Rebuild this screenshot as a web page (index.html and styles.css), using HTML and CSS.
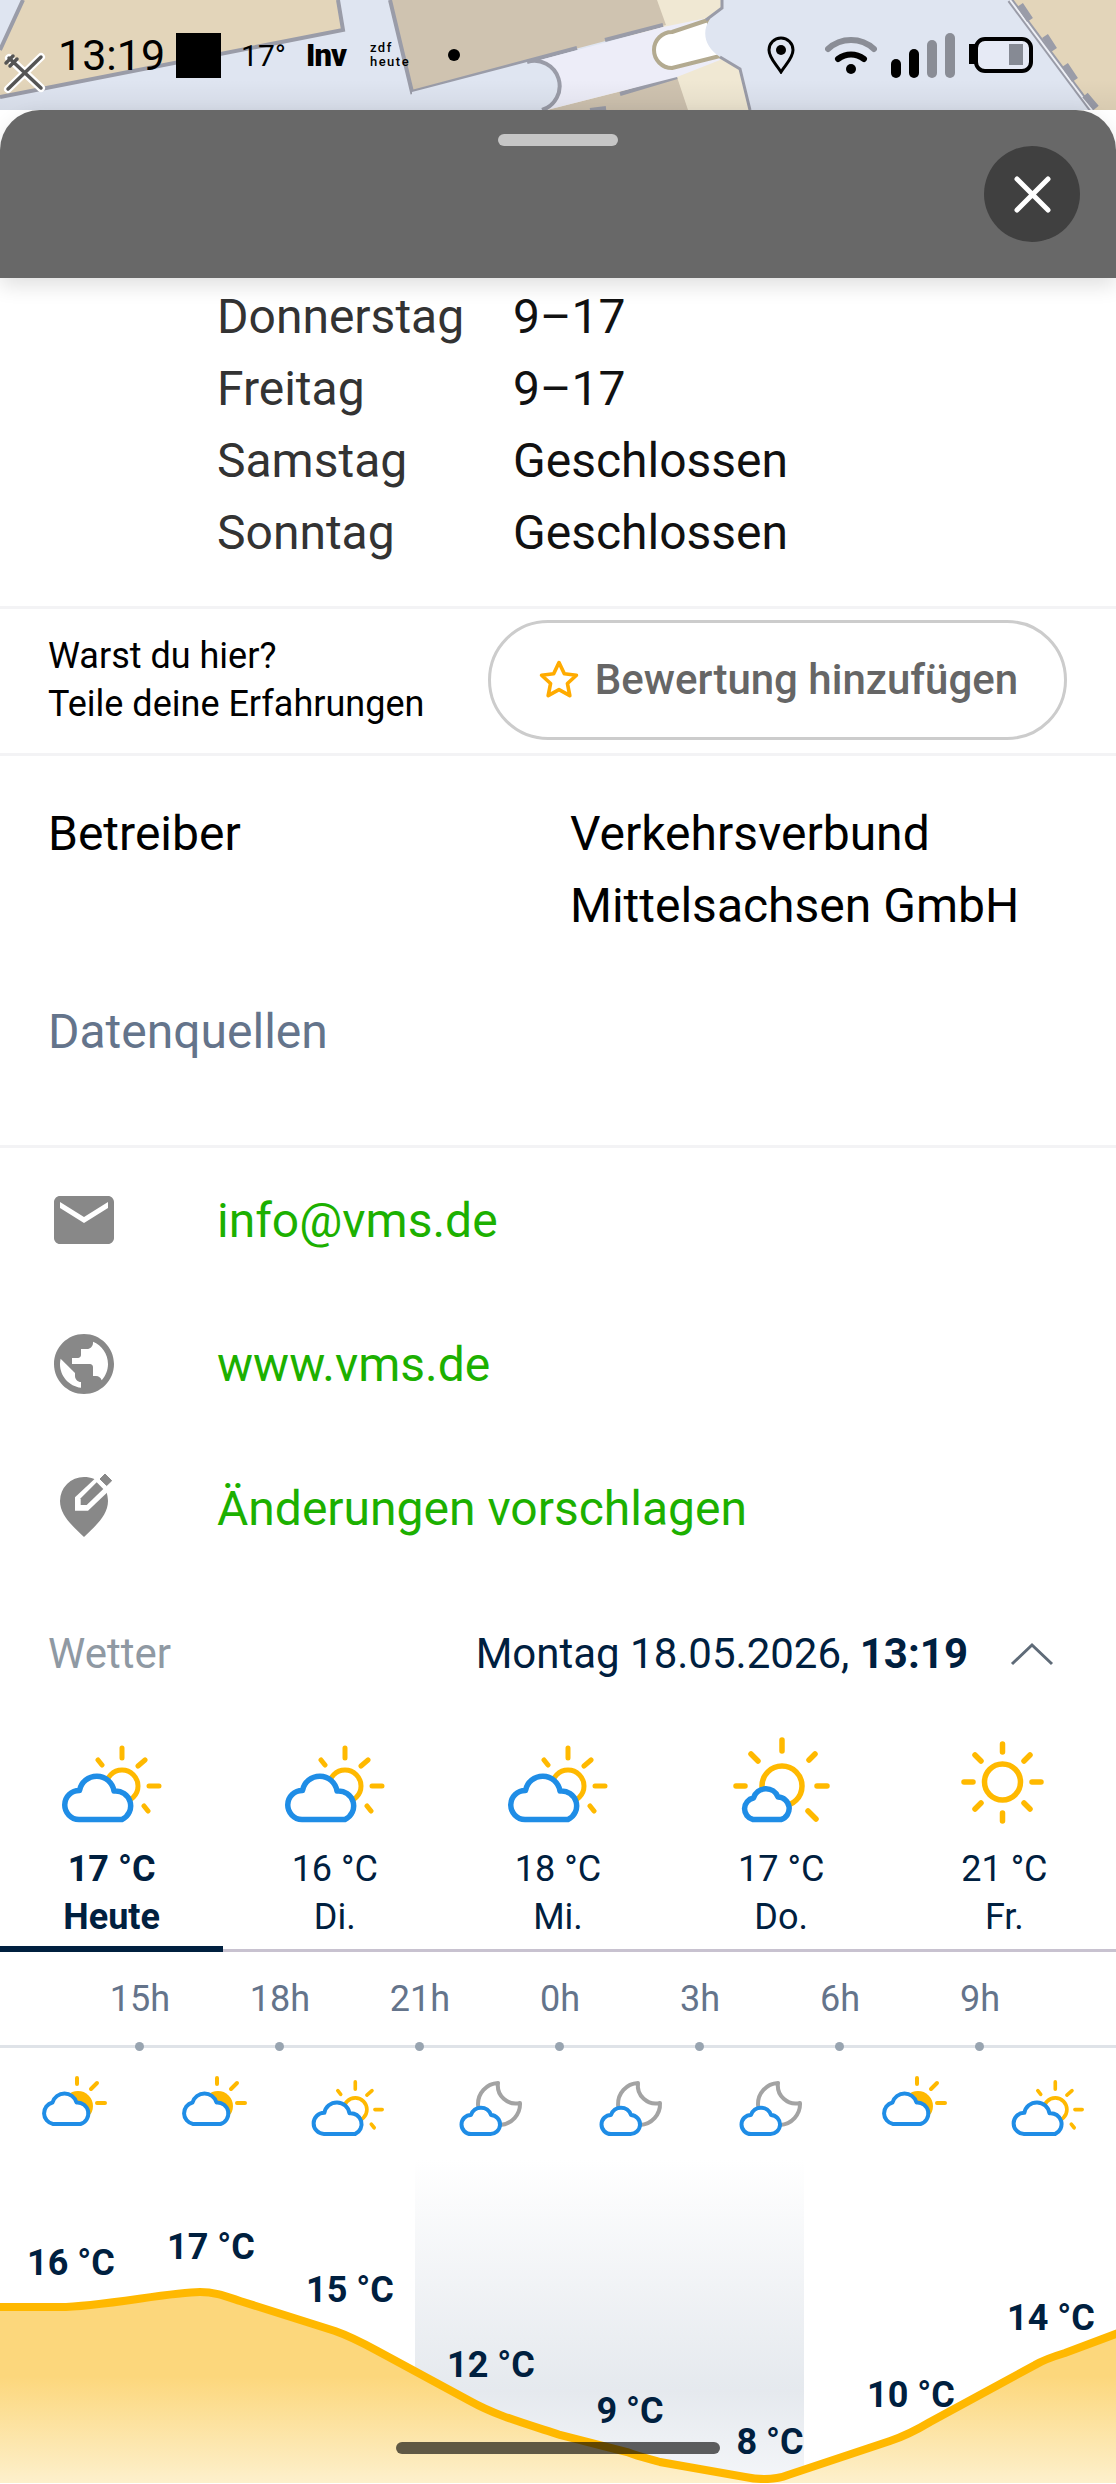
FILE: index.html
```html
<!DOCTYPE html>
<html lang="de">
<head>
  <meta charset="UTF-8"/>
  <meta name="viewport" content="width=device-width, initial-scale=1.0"/>
  <title>Verkehrsverbund Mittelsachsen</title>
  <link rel="stylesheet" href="styles.css">
</head>
<body>
  <svg class="defs" width="0" height="0">
    <defs>
      <symbol id="cloud-sun" viewBox="0 0 110 90">
        <g fill="none" stroke="#ffb900" stroke-width="5" stroke-linecap="round">
          <circle cx="65" cy="42" r="16"/>
          <path d="M65 4v10M81 22l7-6M92 42h10M87 62l4 5M41 16l4 5"/>
        </g>
        <path d="M22 75.5A14.5 14.5 0 0 1 22.5 46.5A17.5 17.5 0 0 1 57 47A15 15 0 0 1 65 75.5Z" fill="#fff" stroke="#1f8de6" stroke-width="5.5" stroke-linejoin="round"/>
      </symbol>
      <symbol id="sun-cloud" viewBox="0 0 110 96">
        <g fill="none" stroke="#ffb900" stroke-width="5.5" stroke-linecap="round">
          <circle cx="56" cy="50" r="20"/>
          <path d="M56 4v11M83 24l6-6M91 50h10M82 75l8 8M10 50h9M25 18l7 7"/>
        </g>
        <path d="M27 83.5A11 11 0 0 1 27.5 62A13 13 0 0 1 52 61A11.5 11.5 0 0 1 55 83.5Z" fill="#fff" stroke="#1f8de6" stroke-width="5.5" stroke-linejoin="round"/>
      </symbol>
      <symbol id="sun" viewBox="0 0 110 96">
        <g fill="none" stroke="#ffb900" stroke-width="5.5" stroke-linecap="round">
          <circle cx="53.5" cy="46" r="18"/>
          <path d="M53.5 8v8M53.5 77v8M15 46h9M83 46h9M26 19l6 6M81 19l-6 6M26 73l6-6M81 73l-6-6"/>
        </g>
      </symbol>
      <symbol id="hr-sun" viewBox="0 0 140 65">
        <circle cx="78" cy="32" r="15" fill="#ffb900"/>
        <path d="M77 4v6M91 15l6-6M97 29h8" fill="none" stroke="#ffb900" stroke-width="4" stroke-linecap="round"/>
        <path d="M53 50A11 11 0 0 1 52.500 28.500A12.500 12.500 0 0 1 76.500 28.500A11 11 0 0 1 80.500 50Z" fill="#fff" stroke="#1f8de6" stroke-width="4" stroke-linejoin="round"/>
      </symbol>
      <symbol id="hr-partly" viewBox="0 0 140 65">
        <use href="#cloud-sun" x="28" y="5" width="80" height="65.500"/>
      </symbol>
      <symbol id="hr-moon" viewBox="0 0 140 65">
        <path d="M78 9A21 21 0 1 0 100 29A18 18 0 0 1 78 9Z" fill="none" stroke="#a3a3a3" stroke-width="4" stroke-linejoin="round"/>
        <path d="M51 60A9.500 9.500 0 0 1 51 41A10.500 10.500 0 0 1 71 41A9.500 9.500 0 0 1 70 60Z" fill="#fff" stroke="#1f8de6" stroke-width="4" stroke-linejoin="round"/>
      </symbol>
    </defs>
  </svg>

  <div class="screen">
    <svg class="map" viewBox="0 0 1116 110" width="1116" height="110">
      <defs>
        <linearGradient id="mapShade" x1="0" y1="0" x2="0" y2="1">
          <stop offset="0" stop-color="#000" stop-opacity="0"/>
          <stop offset="1" stop-color="#000" stop-opacity=".05"/>
        </linearGradient>
      </defs>
      <rect width="1116" height="110" fill="#dfe5f1"/>
      <path d="M23 0H338L343 30L0 97V50Z" fill="#e3d5ba"/>
      <path d="M23 0L0 50M338 0L343 30L0 97" fill="none" stroke="#9a9ca8" stroke-width="4"/>
      <path d="M655 0H722V8L706 22L720 57L740 69L750 110H520L640 30Z" fill="#f0e8d3"/>
      <path d="M390 0H657L666 25L412 92Z" fill="#cfc3b0"/>
      <path d="M547 110L677 77L688 110Z" fill="#cfc3b0"/>
      <path d="M390 0L412 92L577 48M605 40L663 25M606 108L590 110M620 94L677 77" fill="none" stroke="#9a9ca8" stroke-width="4"/>
      <path d="M533 62L663 27L707 18L720 60L677 77L547 110Z" fill="#ededf8"/>
      <path d="M708 20L672 32A18 18 0 0 0 672 68L720 56Z" fill="#fff" stroke="#b3aa90" stroke-width="4" stroke-linejoin="round"/>
      <path d="M1116 0H722V8C700 22 700 44 720 57L740 69L750 110H1089L1008 0Z" fill="#dfe5f1"/>
      <path d="M722 0V8L706 20M720 57L740 69L750 110" fill="none" stroke="#9a9ca8" stroke-width="3"/>
      <path d="M527 62A25 25 0 0 1 542 110H412V92Z" fill="#dfe5f1"/>
      <path d="M527 62A25 25 0 0 1 542 110" fill="none" stroke="#9a9ca8" stroke-width="4"/>
      <path d="M1013 0H1116V110H1094Z" fill="#e3d5ba"/>
      <path d="M1010 0L1092 110" fill="none" stroke="#9a9ca8" stroke-width="6"/>
      <path d="M1010 0L1092 110" fill="none" stroke="#eef0f6" stroke-width="2"/>
      <path d="M1020 5L1030 20M1045 36L1054 50M1065 65L1075 80M1085 95L1096 108" stroke="#9a9ca8" stroke-width="7" fill="none"/>
      <rect y="80" width="1116" height="30" fill="url(#mapShade)"/>
      <g fill="none" stroke-linecap="round">
        <path d="M8 89L41 57M41 88L9 58" stroke="#fff" stroke-width="8"/>
        <path d="M8 89L41 57M41 88L9 58M6 63L13 56M10 66L17 59" stroke="#555" stroke-width="3.500"/>
      </g>
    </svg>

    <div class="status">
      <span class="clock">13:19</span>
      <span class="blackout"></span>
      <span class="temp-now">17°</span>
      <span class="inv">Inv</span>
      <span class="zdf">zdf<br>heute</span>
      <span class="dot"></span>
      <div class="status-right">
        <svg class="loc" width="28" height="38" viewBox="0 0 28 38">
          <path d="M14 36C9 28 2 22 2 14A12 12 0 0 1 26 14C26 22 19 28 14 36Z" fill="none" stroke="#000" stroke-width="3"/>
          <circle cx="14" cy="14" r="5" fill="#000"/>
        </svg>
        <svg width="52" height="40" viewBox="0 0 52 40">
          <path d="M3 14C16 2 36 2 49 14" fill="none" stroke="#8a8d96" stroke-width="6" stroke-linecap="round"/>
          <path d="M13 24C21 18 31 18 39 24" fill="none" stroke="#000" stroke-width="6" stroke-linecap="round"/>
          <circle cx="26" cy="34" r="5" fill="#000"/>
        </svg>
        <div class="signal">
          <span class="bar bar1"></span>
          <span class="bar bar2"></span>
          <span class="bar bar3"></span>
          <span class="bar bar4"></span>
        </div>
        <svg width="64" height="36" viewBox="0 0 64 36">
          <path d="M0 7h6v20h-6z" fill="#000"/>
          <rect x="7" y="2" width="55" height="32" rx="9" fill="#e6eaf5" stroke="#000" stroke-width="4"/>
          <rect x="40" y="7" width="14" height="21" fill="#868a94"/>
        </svg>
      </div>
    </div>

    <div class="sheet">
      <div class="sheet-head">
        <div class="handle"></div>
        <div class="close-btn">
          <svg width="37" height="37" viewBox="0 0 37 37">
            <path d="M3 3L34 34M34 3L3 34" stroke="#fff" stroke-width="5" stroke-linecap="round"/>
          </svg>
        </div>
      </div>

      <div class="hours">
        <span class="hours-day">Donnerstag</span><span>9–17</span>
        <span class="hours-day">Freitag</span><span>9–17</span>
        <span class="hours-day">Samstag</span><span>Geschlossen</span>
        <span class="hours-day">Sonntag</span><span>Geschlossen</span>
      </div>

      <div class="rate">
        <p>Warst du hier?<br>Teile deine Erfahrungen</p>
        <div class="rate-btn">
          <svg width="44" height="44" viewBox="0 0 24 24">
            <path d="M12 2.500l2.900 6.100 6.600.800-4.900 4.500 1.300 6.600L12 17.200l-5.900 3.300 1.300-6.600L2.500 9.400l6.600-.8z" fill="none" stroke="#ffab00" stroke-width="2" stroke-linejoin="round"/>
          </svg>
          Bewertung hinzufügen
        </div>
      </div>

      <div class="operator">
        <div class="op-row">
          <span>Betreiber</span>
          <span>Verkehrsverbund<br>Mittelsachsen GmbH</span>
        </div>
        <div class="sources">Datenquellen</div>
      </div>

      <div class="contact">
        <div class="contact-row">
          <svg width="72" height="72" viewBox="0 0 24 24"><path d="M20 4H4c-1.100 0-2 .9-2 2v12c0 1.100.9 2 2 2h16c1.100 0 2-.9 2-2V6c0-1.100-.9-2-2-2zm0 4l-8 5-8-5V6l8 5 8-5v2z"/></svg>
          <a>info@vms.de</a>
        </div>
        <div class="contact-row">
          <svg width="72" height="72" viewBox="0 0 24 24"><path d="M12 2C6.480 2 2 6.480 2 12s4.480 10 10 10 10-4.480 10-10S17.520 2 12 2zm-1 17.930c-3.950-.49-7-3.850-7-7.930 0-.62.08-1.210.21-1.790L9 15v1c0 1.100.9 2 2 2v1.930zm6.900-2.540c-.26-.81-1-1.390-1.900-1.390h-1v-3c0-.55-.45-1-1-1H8v-2h2c.55 0 1-.45 1-1V7h2c1.100 0 2-.9 2-2v-.41c2.930 1.190 5 4.060 5 7.410 0 2.080-.8 3.970-2.100 5.390z"/></svg>
          <a>www.vms.de</a>
        </div>
        <div class="contact-row">
          <svg width="72" height="72" viewBox="0 0 72 72">
            <path d="M36 65C26 55 12 44 12 29A24 24 0 0 1 36 5C50 5 60 15 60 29C60 44 46 55 36 65Z"/>
            <path d="M27 38.700V25.300L50 3.700L66 14L40 38.700Z" fill="#fff"/>
            <path d="M32.700 33V26.300L48.700 10.300L55.300 17L38.700 33Z"/>
            <path d="M52 7L57 2L63.700 8.700L58.700 13.500Z" stroke="#888" stroke-width="1" stroke-linejoin="round"/>
          </svg>
          <a>Änderungen vorschlagen</a>
        </div>
      </div>

      <div class="weather-head">
        <span class="weather-title">Wetter</span>
        <span class="weather-date">Montag 18.05.2026, <b>13:19</b></span>
        <svg width="44" height="24" viewBox="0 0 44 24">
          <path d="M2 22L22 3L42 22" fill="none" stroke="#5f6b78" stroke-width="3"/>
        </svg>
      </div>

      <div class="days">
        <div class="day active">
          <svg width="110" height="96"><use href="#cloud-sun" y="8" width="110" height="90"/></svg>
          <div class="day-temp">17 °C</div>
          <div>Heute</div>
        </div>
        <div class="day">
          <svg width="110" height="96"><use href="#cloud-sun" y="8" width="110" height="90"/></svg>
          <div class="day-temp">16 °C</div>
          <div>Di.</div>
        </div>
        <div class="day">
          <svg width="110" height="96"><use href="#cloud-sun" y="8" width="110" height="90"/></svg>
          <div class="day-temp">18 °C</div>
          <div>Mi.</div>
        </div>
        <div class="day">
          <svg width="110" height="96"><use href="#sun-cloud" width="110" height="96"/></svg>
          <div class="day-temp">17 °C</div>
          <div>Do.</div>
        </div>
        <div class="day">
          <svg width="110" height="96"><use href="#sun" width="110" height="96"/></svg>
          <div class="day-temp">21 °C</div>
          <div>Fr.</div>
        </div>
      </div>

      <div class="ruler">
        <span class="tick">15h</span>
        <span class="tick">18h</span>
        <span class="tick">21h</span>
        <span class="tick">0h</span>
        <span class="tick">3h</span>
        <span class="tick">6h</span>
        <span class="tick">9h</span>
      </div>

      <div class="hour-icons">
        <svg width="140" height="65"><use href="#hr-sun"/></svg>
        <svg width="140" height="65"><use href="#hr-sun"/></svg>
        <svg width="140" height="65"><use href="#hr-partly"/></svg>
        <svg width="140" height="65"><use href="#hr-moon"/></svg>
        <svg width="140" height="65"><use href="#hr-moon"/></svg>
        <svg width="140" height="65"><use href="#hr-moon"/></svg>
        <svg width="140" height="65"><use href="#hr-sun"/></svg>
        <svg width="140" height="65"><use href="#hr-partly"/></svg>
      </div>

      <div class="chart">
        <svg width="1116" height="344" viewBox="0 0 1116 344">
          <defs>
            <linearGradient id="night" x1="0" y1="0" x2="0" y2="344" gradientUnits="userSpaceOnUse">
              <stop offset="0" stop-color="#fff"/>
              <stop offset=".06" stop-color="#fff"/>
              <stop offset=".73" stop-color="#e5e9ee"/>
              <stop offset="1" stop-color="#f4f6f9"/>
            </linearGradient>
            <linearGradient id="warm" x1="0" y1="150" x2="0" y2="344" gradientUnits="userSpaceOnUse">
              <stop offset="0" stop-color="#fcd77c"/>
              <stop offset=".45" stop-color="#fcd77c"/>
              <stop offset="1" stop-color="#fdf0cc"/>
            </linearGradient>
          </defs>
          <rect x="415" width="389" height="344" fill="url(#night)"/>
          <path d="M-5 168H60C100 168 170 153 200 153C215 153 225 157 240 162L335 192C355 199 370 208 385 216L470 262C495 276 520 283 560 296L627 313C640 318 650 320 660 323L745 338C760 341 775 341 788 336L890 302C905 297 920 289 930 283L1035 226C1045 220 1055 217 1065 214L1121 193V350H-5Z" fill="url(#warm)"/>
          <path d="M-5 168H60C100 168 170 153 200 153C215 153 225 157 240 162L335 192C355 199 370 208 385 216L470 262C495 276 520 283 560 296L627 313C640 318 650 320 660 323L745 338C760 341 775 341 788 336L890 302C905 297 920 289 930 283L1035 226C1045 220 1055 217 1065 214L1121 193" fill="none" stroke="#ffb800" stroke-width="8"/>
        </svg>
        <span class="chart-label" style="left:71px;top:103px">16 °C</span>
        <span class="chart-label" style="left:211px;top:87px">17 °C</span>
        <span class="chart-label" style="left:350px;top:130px">15 °C</span>
        <span class="chart-label" style="left:491px;top:205px">12 °C</span>
        <span class="chart-label" style="left:630px;top:251px">9 °C</span>
        <span class="chart-label" style="left:770px;top:282px">8 °C</span>
        <span class="chart-label" style="left:911px;top:235px">10 °C</span>
        <span class="chart-label" style="left:1051px;top:158px">14 °C</span>
      </div>
    </div>

    <div class="home-bar"></div>
  </div>
</body>
</html>
```

FILE: styles.css
```css
* {
  box-sizing: border-box;
}
html, body {
  margin: 0;
  padding: 0;
}
body {
  font-family: Roboto, "Liberation Sans", sans-serif;
  background-color: white;
  color: #000;
}
.defs {
  position: absolute;
}
.screen {
  position: relative;
  width: 1116px;
  height: 2484px;
  overflow: hidden;
  padding-top: 110px;
}
.map {
  position: absolute;
  top: 0;
  left: 0;
}

/* status bar */
.status {
  position: absolute;
  top: 0;
  left: 0;
  width: 1116px;
  height: 110px;
  display: flex;
  align-items: center;
  padding: 0 83px 0 58px;
}
.clock {
  font-size: 43px;
  margin-right: 11px;
}
.blackout {
  width: 45px;
  height: 45px;
  background-color: #000;
  margin-right: 20px;
}
.temp-now {
  font-size: 30px;
  margin-right: 20px;
}
.inv {
  font-size: 31px;
  font-weight: 900;
  letter-spacing: -1px;
  margin-right: 24px;
}
.zdf {
  font-size: 13px;
  line-height: 14px;
  font-weight: 500;
  letter-spacing: 1.5px;
}
.dot {
  width: 12px;
  height: 12px;
  border-radius: 50%;
  background-color: #000;
  margin-left: 38px;
}
.status-right {
  margin-left: auto;
  display: flex;
  align-items: center;
  gap: 14px;
}
.loc {
  margin-right: 16px;
}
.signal {
  display: flex;
  align-items: flex-end;
  gap: 8px;
  height: 45px;
}
.bar {
  width: 10px;
  border-radius: 5px;
  background-color: #000;
}
.bar1 { height: 19px; }
.bar2 { height: 29px; }
.bar3 { height: 38px; background-color: #8a8d96; }
.bar4 { height: 45px; background-color: #8a8d96; }

/* sheet */
.sheet {
  position: relative;
}
.sheet-head {
  position: relative;
  z-index: 1;
  height: 168px;
  background-color: #686868;
  border-radius: 40px 40px 0 0;
  box-shadow: 0 8px 20px rgba(0, 0, 0, 0.12);
  padding-top: 24px;
}
.handle {
  width: 120px;
  height: 12px;
  margin: 0 auto;
  border-radius: 6px;
  background-color: #c6c6c6;
}
.close-btn {
  width: 96px;
  height: 96px;
  margin-left: 984px;
  border-radius: 50%;
  background-color: #404040;
  display: flex;
  align-items: center;
  justify-content: center;
}
.sheet > div:not(.sheet-head) {
  background-color: white;
}

.hours {
  display: grid;
  grid-template-columns: 296px 1fr;
  padding: 3px 0 37px 217px;
  font-size: 48px;
  line-height: 72px;
  color: #111;
  border-bottom: 3px solid #f3f3f5;
}
.hours-day {
  color: #333;
}
.rate {
  height: 147px;
  display: flex;
  align-items: center;
  justify-content: space-between;
  padding: 0 49px 3px 48px;
  border-bottom: 3px solid #f3f3f5;
}
.rate p {
  margin: 0;
  font-size: 36px;
  line-height: 48px;
}
.rate-btn {
  width: 579px;
  height: 120px;
  border: 3px solid #ccc;
  border-radius: 60px;
  display: flex;
  align-items: center;
  justify-content: center;
  gap: 14px;
  color: #666;
  font-size: 42px;
  font-weight: 500;
}
.operator {
  height: 392px;
  padding-top: 42px;
  font-size: 48px;
  line-height: 72px;
  border-bottom: 3px solid #f3f3f5;
}
.op-row {
  display: grid;
  grid-template-columns: 522px 1fr;
  padding-left: 48px;
}
.sources {
  margin-top: 54px;
  padding-left: 48px;
  color: #64748b;
}
.contact-row {
  height: 144px;
  display: flex;
  align-items: center;
  gap: 97px;
  padding-left: 48px;
  font-size: 48px;
}
.contact-row svg {
  fill: #888;
  flex-shrink: 0;
}
.contact-row a {
  color: #1cb000;
}
.weather-head {
  height: 72px;
  margin-top: 36px;
  display: flex;
  align-items: center;
  padding: 3px 62px 0 48px;
  color: #00203f;
  font-size: 42px;
}
.weather-title {
  color: #8f99a3;
  margin-right: auto;
}
.weather-date {
  margin-right: 42px;
}
.days {
  display: grid;
  grid-template-columns: repeat(5, 1fr);
  height: 264px;
  padding-top: 48px;
  box-shadow: inset 0 -3px 0 #c8c2d0;
  font-size: 36px;
  line-height: 48px;
  color: #00203f;
  text-align: center;
}
.day svg {
  display: block;
  margin: 0 auto 13px;
}
.day.active {
  font-weight: 700;
  border-bottom: 6px solid #00203f;
}
.ruler {
  height: 96px;
  display: flex;
  padding-left: 70px;
  border-bottom: 3px solid #dfe3e8;
}
.tick {
  position: relative;
  width: 140px;
  padding-top: 23px;
  text-align: center;
  font-size: 36px;
  line-height: 48px;
  color: #64748b;
}
.tick::after {
  content: "";
  position: absolute;
  left: 65px;
  bottom: -6px;
  width: 9px;
  height: 9px;
  border-radius: 50%;
  background-color: #98a4b0;
}
.hour-icons {
  display: flex;
  padding-top: 26px;
  height: 91px;
}
.hour-icons svg {
  display: block;
  flex-shrink: 0;
}
.chart {
  position: relative;
  height: 344px;
}
.chart svg {
  display: block;
}
.chart-label {
  position: absolute;
  transform: translateX(-50%);
  font-size: 36px;
  line-height: 42px;
  font-weight: 700;
  color: #00203f;
  white-space: nowrap;
}
.home-bar {
  position: absolute;
  left: 396px;
  top: 2442px;
  width: 324px;
  height: 12px;
  border-radius: 6px;
  background-color: rgba(0, 0, 0, 0.62);
}
```
